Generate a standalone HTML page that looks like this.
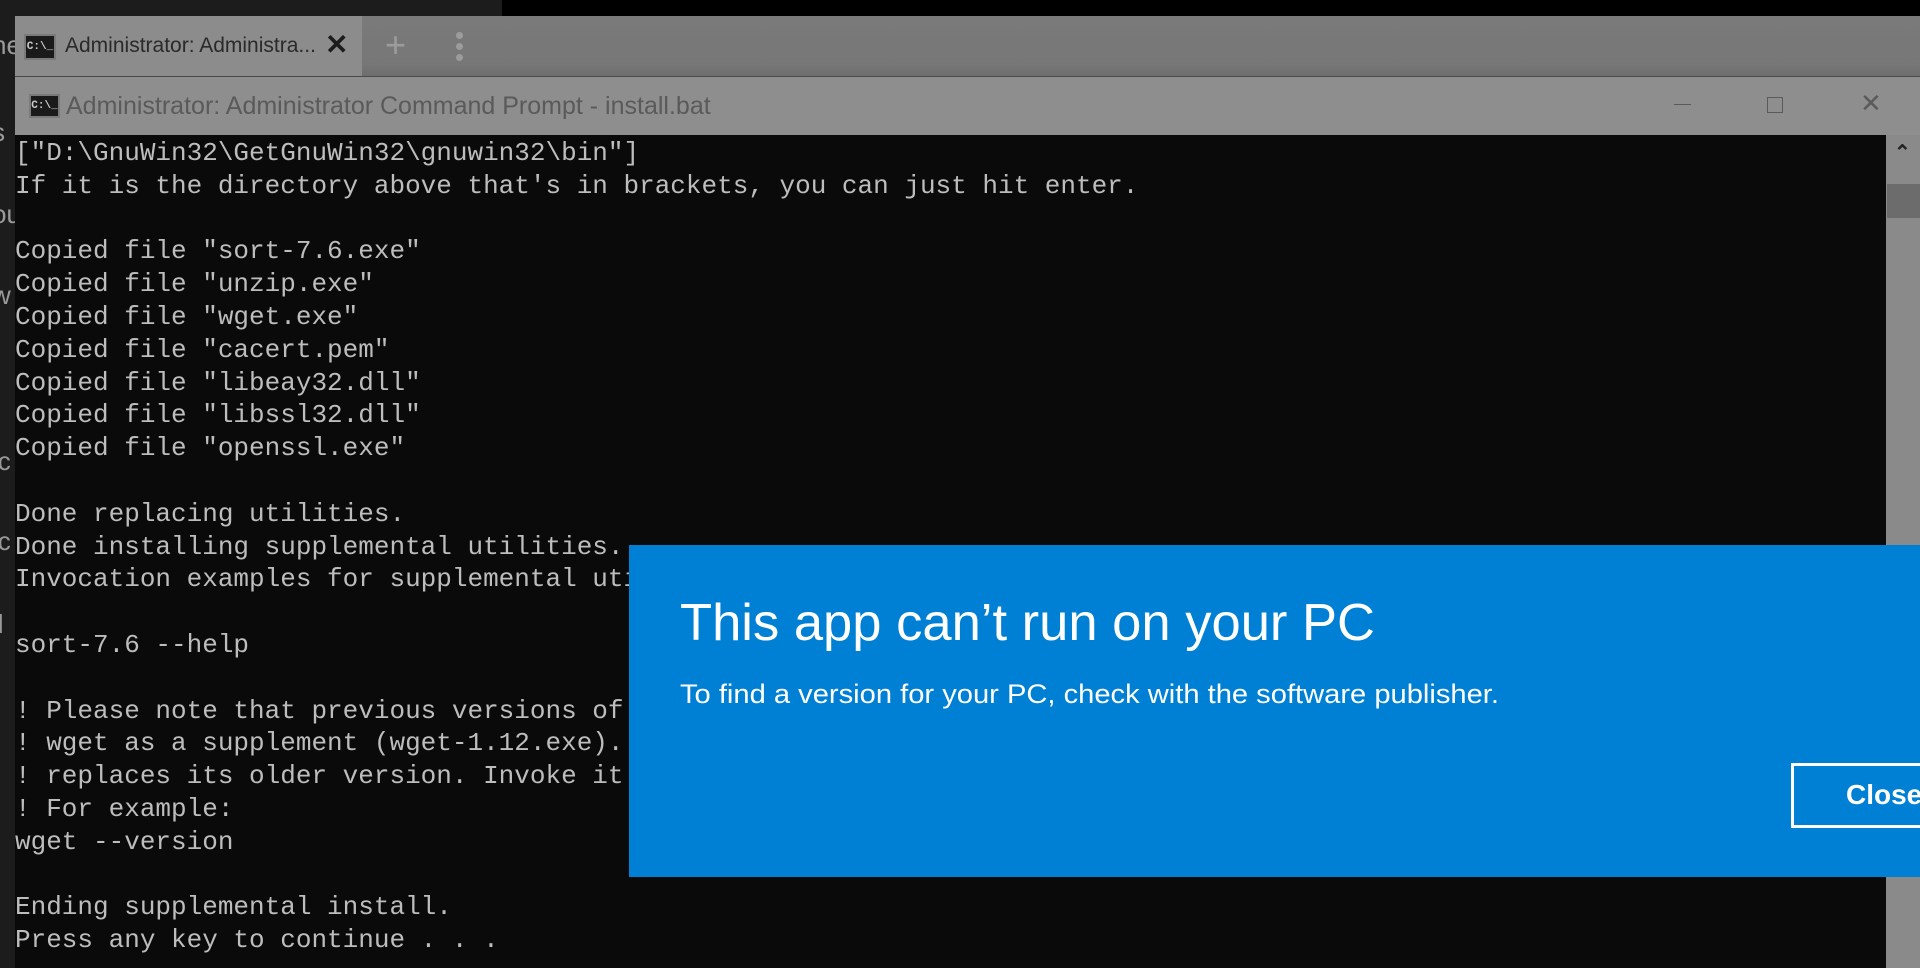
<!DOCTYPE html>
<html><head><meta charset="utf-8"><style>
body{margin:0;width:1920px;height:968px;overflow:hidden;background:#0c0c0c;position:relative;font-family:"Liberation Sans",sans-serif}
div{position:absolute}
.ic{background:#1a1a1a;border:2px solid #7a7a7a;color:#ccc;font:bold 11px "Liberation Mono",monospace;text-align:center;box-sizing:border-box}
pre{margin:0;font:26px/32.8px "Liberation Mono",monospace;color:#bdbdbd}
.lf{color:#9a9a9a;font-size:26px;left:-8px}
</style></head><body>
<div style="left:0;top:0;width:502px;height:16px;background:#1c1c1c"></div>
<div style="left:502px;top:0;width:1418px;height:16px;background:#000"></div>
<div style="left:0;top:16px;width:15px;height:952px;background:#1c1c1c"></div>
<div class="lf" style="top:30px">ne</div>
<div class="lf" style="top:117px">s</div>
<div class="lf" style="top:199px">ou</div>
<div class="lf" style="top:280px">w</div>
<div class="lf" style="top:446px">ic</div>
<div class="lf" style="top:526px">ic</div>
<div class="lf" style="top:609px">il</div>
<div style="left:15px;top:16px;width:1905px;height:60px;background:linear-gradient(#7a7a7a,#777 80%,#6e6e6e)"></div>
<div style="left:15px;top:16px;width:347px;height:60px;background:#8c8c8c"></div>
<div class="ic" style="left:24px;top:34px;width:32px;height:26px;line-height:22px">C:\_</div>
<div style="left:65px;top:34px;font-size:21px;color:#2a2a2a">Administrator: Administra...</div>
<div style="left:325px;top:28px;font-size:28px;color:#1c1c1c;font-weight:bold">✕</div>
<div style="left:385px;top:24px;font-size:36px;color:#9c9c9c;font-weight:300">+</div>
<div style="left:456px;top:32px;width:7px;height:7px;border-radius:50%;background:#9c9c9c"></div>
<div style="left:456px;top:43px;width:7px;height:7px;border-radius:50%;background:#9c9c9c"></div>
<div style="left:456px;top:54px;width:7px;height:7px;border-radius:50%;background:#9c9c9c"></div>
<div style="left:15px;top:76px;width:1905px;height:59px;background:#8e8e8e;border-top:1px solid #4a4a4a"></div>
<div class="ic" style="left:29px;top:94px;width:31px;height:24px;line-height:20px">C:\_</div>
<div style="left:66px;top:92px;font-size:25px;color:#5a5a5a">Administrator: Administrator Command Prompt - install.bat</div>
<div style="left:1674px;top:104px;width:17px;height:1px;background:#5a5a5a"></div>
<div style="left:1767px;top:97px;width:14px;height:14px;border:1px solid #5a5a5a"></div>
<div style="left:1860px;top:88px;font-size:26px;color:#5a5a5a">✕</div>
<div style="left:1886px;top:135px;width:34px;height:833px;background:#8a8a8a"></div>
<div style="left:1887px;top:184px;width:33px;height:34px;background:#6c6c6c"></div>
<div style="left:1894px;top:140px;font-size:20px;color:#222;font-weight:bold">⌃</div>
<div style="left:15px;top:135px;width:1871px;height:833px;background:#0a0a0a"></div>
<pre style="position:absolute;left:15px;top:137px">["D:\GnuWin32\GetGnuWin32\gnuwin32\bin"]
If it is the directory above that's in brackets, you can just hit enter.

Copied file "sort-7.6.exe"
Copied file "unzip.exe"
Copied file "wget.exe"
Copied file "cacert.pem"
Copied file "libeay32.dll"
Copied file "libssl32.dll"
Copied file "openssl.exe"

Done replacing utilities.
Done installing supplemental utilities.
Invocation examples for supplemental utilities:

sort-7.6 --help

! Please note that previous versions of
! wget as a supplement (wget-1.12.exe).
! replaces its older version. Invoke it
! For example:
wget --version

Ending supplemental install.
Press any key to continue . . .</pre>
<div style="left:629px;top:545px;width:1291px;height:332px;background:#0080d4"></div>
<svg style="position:absolute;left:0;top:0" width="1920" height="968">
<text x="680" y="640" font-family="Liberation Sans" font-size="52" fill="#fff" textLength="695" lengthAdjust="spacingAndGlyphs">This app can’t run on your PC</text>
<text x="680" y="703" font-family="Liberation Sans" font-size="27" fill="#fff" textLength="819" lengthAdjust="spacingAndGlyphs">To find a version for your PC, check with the software publisher.</text>
</svg>
<div style="left:1791px;top:763px;width:200px;height:65px;border:3px solid #fff;box-sizing:border-box"></div>
<div style="left:1846px;top:779px;font-size:28px;font-weight:bold;color:#fff">Close</div>
</body></html>
